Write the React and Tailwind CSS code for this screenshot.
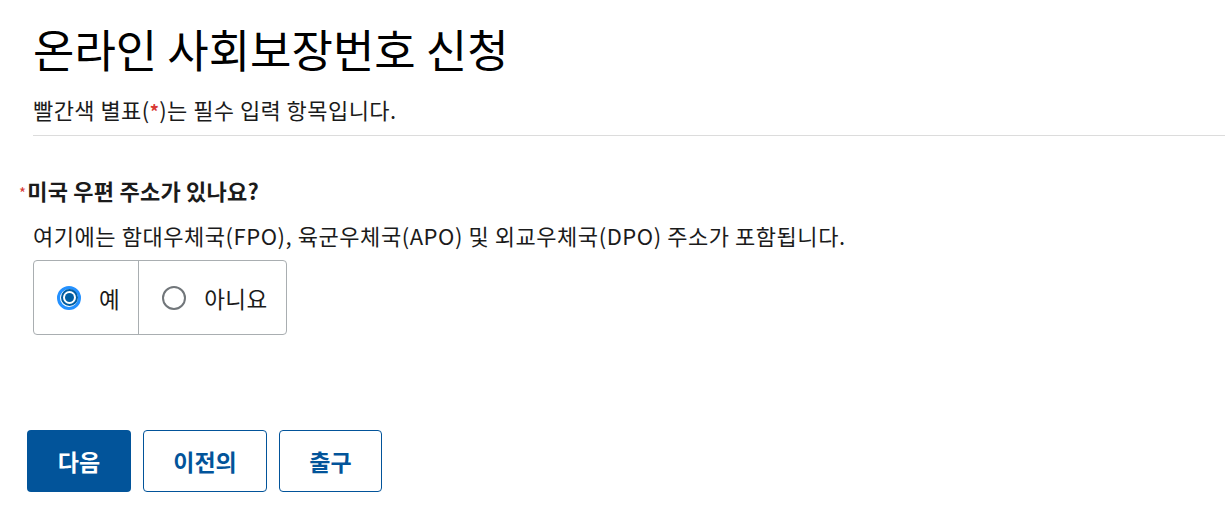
import React, { useState } from "react";

const font = { fontFamily: '"Noto Sans CJK KR", "Noto Sans", sans-serif' };

const Radio = ({ label, checked, onSelect, first }) => (
  <label
    onClick={onSelect}
    className={`flex items-center h-full cursor-pointer select-none ${first ? "pl-[23px] pr-[18px] border-r border-[#a9aeb1]" : "pl-[23px] pr-[18px]"}`}
  >
    {checked ? (
      <span className="w-[24px] h-[24px] rounded-full border-[3px] border-[#2491ff] flex items-center justify-center shrink-0">
        <span className="w-[17px] h-[17px] rounded-full border-2 border-[#005ea2] flex items-center justify-center">
          <span className="w-[9px] h-[9px] rounded-full bg-[#005ea2]" />
        </span>
      </span>
    ) : (
      <span className="w-[24px] h-[24px] rounded-full border-2 border-[#71767a] shrink-0" />
    )}
    <span className="ml-[18px] text-[22.5px] leading-[28px] tracking-[0.02em] text-[#1b1b1b]">{label}</span>
  </label>
);

export default function App() {
  const [hasAddress, setHasAddress] = useState(true);

  return (
    <div className="bg-white min-h-[515px] w-[1225px] overflow-hidden text-[#1b1b1b]" style={font}>
      <div className="pl-[33px] pt-[19px]">
        <h1 className="text-[45px] leading-[60px] font-normal text-black">온라인 사회보장번호 신청</h1>
        <p className="mt-[17px] text-[22px] leading-[26px] tracking-[0.02em]">
          빨간색 별표(<span className="text-[#d83933] text-[18px] font-bold">*</span>)는 필수 입력 항목입니다.
        </p>
        <div className="mt-[11px] h-px bg-[#dcdcdc]" />
      </div>

      <div className="pl-[19px] mt-[41px]">
        <h2 className="text-[22px] leading-[26px] font-bold tracking-[0.01em] flex items-center">
          <span className="text-[#d83933] text-[15px] font-normal mr-[1px] translate-y-[3px]">*</span>미국 우편 주소가 있나요?
        </h2>
      </div>

      <div className="pl-[33px]">
        <p className="mt-[19px] text-[22px] leading-[26px] tracking-[0.025em]">
          여기에는 함대우체국(FPO), 육군우체국(APO) 및 외교우체국(DPO) 주소가 포함됩니다.
        </p>
        <div className="mt-[12px] inline-flex h-[75px] w-[254px] border border-[#a9aeb1] rounded-[4px]">
          <Radio label="예" checked={hasAddress} onSelect={() => setHasAddress(true)} first />
          <Radio label="아니요" checked={!hasAddress} onSelect={() => setHasAddress(false)} />
        </div>
      </div>

      <div className="pl-[27px] mt-[95px] flex gap-[12px]">
        <button className="w-[104px] h-[62px] rounded-[4px] bg-[#02549a] text-white text-[23px] font-bold">다음</button>
        <button className="w-[124px] h-[62px] rounded-[4px] border border-[#02549a] text-[#02549a] text-[23px] font-bold bg-white">이전의</button>
        <button className="w-[103px] h-[62px] rounded-[4px] border border-[#02549a] text-[#02549a] text-[23px] font-bold bg-white">출구</button>
      </div>
    </div>
  );
}
